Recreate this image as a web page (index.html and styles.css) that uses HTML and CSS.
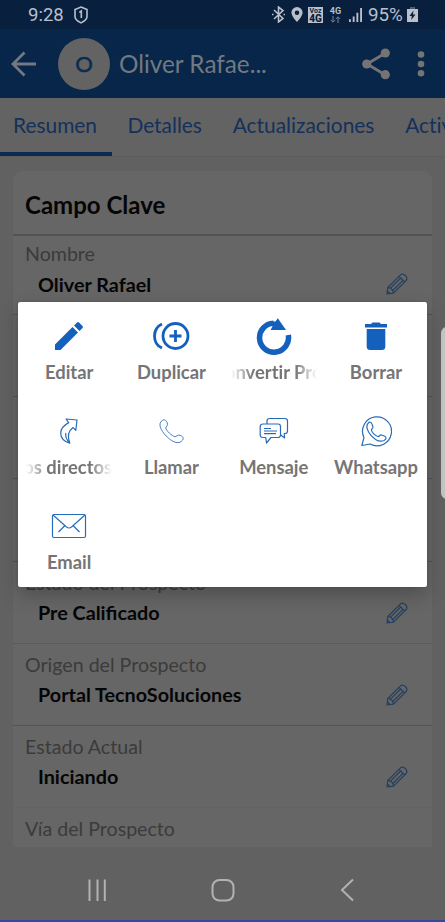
FILE: index.html
```html
<!DOCTYPE html>
<html lang="es">
<head>
<meta charset="utf-8">
<title>Oliver Rafael</title>
<link rel="stylesheet" href="styles.css">
</head>
<body>
<svg class="symbols" aria-hidden="true">
  <symbol id="edit-outline" viewBox="0 0 22 22">
    <path d="M1 21l.8-6.500L14.500 1.800c3-2.400 8 2.300 5.700 5.700L7.500 20.200zM1.800 14.500l2.700.7 2.300 2.300.7 2.700M13 3.300l5.700 5.700M4.500 15.200L14.700 5M6.800 17.500L17 7.300M1.500 18l2.500 2.500"/>
  </symbol>
</svg>
<div class="phone">
  <header class="status">
    <span class="clock">9:28</span>
    <svg class="shield" width="16" height="18" viewBox="0 0 16 18"><path d="M8 1l6 2.500v7.200c0 2.600-3 4.700-6 6.200-3-1.500-6-3.600-6-6.200V3.500z"/><path d="M6.300 6.300L8.300 5v7"/></svg>
    <div class="indicators">
      <svg class="bt" width="15" height="17" viewBox="0 0 15 17"><path d="M3 4l9 8.500L7.500 16V1L12 4.500 3 13M1 8.500h1.500M12.500 8.500H14"/></svg>
      <svg class="pin" width="12" height="15" viewBox="0 0 12 15"><path fill-rule="evenodd" d="M6 0a5.600 5.600 0 0 1 5.600 5.600C11.600 9.500 6 15 6 15S.4 9.500.4 5.600A5.600 5.600 0 0 1 6 0zm0 3.400a2.300 2.300 0 1 0 0 4.600 2.300 2.300 0 0 0 0-4.600z"/></svg>
      <span class="volte"><span>Voz</span><b>4G</b></span>
      <span class="data"><span>4G</span><svg width="11" height="7" viewBox="0 0 11 7"><path d="M3 0v6M.8 4L3 6.200 5.200 4M8 7V1M5.800 3L8 .8 10.200 3"/></svg></span>
      <svg class="signal" width="13" height="14" viewBox="0 0 14 15"><path d="M0 12h2v3H0zM4 9h2v6H4zM8 5h2v10H8zM12 0h2v15h-2z"/></svg>
      <span class="percent">95%</span>
      <svg class="battery" width="11" height="15" viewBox="0 0 11 15"><path opacity=".4" d="M3 0h5v2H3z"/><path fill-rule="evenodd" d="M0 2h11v13H0zM6.500 3.500L2.500 9h2.300l-.6 4L8.500 7.500H6z"/></svg>
    </div>
  </header>

  <div class="appbar">
    <svg class="back" width="26" height="26" viewBox="0 0 26 26"><path d="M25 13H2M13.500 1.500L2 13l11.500 11.500"/></svg>
    <span class="avatar">O</span>
    <h1>Oliver Rafae...</h1>
    <svg class="share" width="28" height="32" viewBox="0 0 28 32"><path d="M23.500 5L5 16l18.500 11"/><circle cx="23.300" cy="5" r="4.600"/><circle cx="4.700" cy="16" r="4.600"/><circle cx="23.300" cy="26.700" r="4.600"/></svg>
    <svg class="more" width="8" height="26" viewBox="0 0 8 26"><circle cx="4" cy="3.500" r="3.300"/><circle cx="4" cy="13" r="3.300"/><circle cx="4" cy="22.300" r="3.300"/></svg>
  </div>

  <nav class="tabs">
    <span class="tab active">Resumen</span><span class="tab">Detalles</span><span class="tab">Actualizaciones</span><span class="tab">Actividades</span>
  </nav>

  <main class="content">
    <section class="card">
      <h2>Campo Clave</h2>
      <div class="field first"><label>Nombre</label><div class="value"><span>Oliver Rafael</span><svg class="pencil"><use href="#edit-outline"/></svg></div></div>
      <div class="field"></div>
      <div class="field"></div>
      <div class="field"></div>
      <div class="field light"><label>Estado del Prospecto</label><div class="value"><span>Pre Calificado</span><svg class="pencil"><use href="#edit-outline"/></svg></div></div>
      <div class="field"><label>Origen del Prospecto</label><div class="value"><span>Portal TecnoSoluciones</span><svg class="pencil"><use href="#edit-outline"/></svg></div></div>
      <div class="field faint"><label>Estado Actual</label><div class="value"><span>Iniciando</span><svg class="pencil"><use href="#edit-outline"/></svg></div></div>
      <div class="field"><label>Vía del Prospecto</label></div>
    </section>
  </main>

  <footer class="navbar">
    <svg width="20" height="24" viewBox="0 0 20 24"><path d="M2.500 1.500v21.500M10.500 1.500v21.500M17.800 1.500v21.500"/></svg>
    <svg width="24" height="24" viewBox="0 0 24 24"><rect x="1.500" y="2" width="21" height="20.500" rx="7"/></svg>
    <svg width="16" height="24" viewBox="0 0 16 24"><path d="M14 1.500L3 12l11 10.500"/></svg>
  </footer>

  <div class="edge-handle"></div>

  <div class="dialog">
    <div class="action"><div class="icon"><svg class="solid" width="36" height="36" viewBox="0 0 36 36"><path d="M4 26.500L21.500 9l5.500 5.500L9.500 32H4zM23 7.500l3-3q1-1 2 0l3.500 3.500q1 1 0 2l-3 3z"/></svg></div><span class="label">Editar</span></div>
    <div class="action"><div class="icon"><svg class="thick" width="40" height="36" viewBox="0 0 40 36"><circle cx="24.500" cy="18" r="12.500"/><path d="M24.500 12v12M18.500 18h12M11 5.900C1 10.500 1 25.500 11 30.100"/></svg></div><span class="label">Duplicar</span></div>
    <div class="action"><div class="icon"><svg class="convert" width="38" height="38" viewBox="0 0 38 38"><path class="arc" d="M33.300 18A14.500 14.500 0 1 1 18.500 6.200"/><path class="head" d="M22.800 1.200L31 13H15.500L17.500 9.500 15 4.500H20.500z"/></svg></div><span class="label faded convert-label"><span>Convertir Pros</span></span></div>
    <div class="action"><div class="icon"><svg class="solid" width="24" height="30" viewBox="0 0 24 30"><path d="M1 3h6l1.500-1.500h7L17 3h6v3.500H1zM2.700 8h18.600v17.500q0 3.500-3.500 3.500H6.200q-3.500 0-3.500-3.500z"/></svg></div><span class="label">Borrar</span></div>

    <div class="action"><div class="icon"><svg class="thin" width="18" height="26" viewBox="0 0 18 26"><path d="M6 1L17 2 15.800 12.300 13 9.600C7.700 13.500 7.500 19.500 9.800 25.300 4 23.500.7 19.500.7 15 .7 10.500 4.300 7 8.700 4.600zM9.800 25.300C6 21 5 18 5.800 15"/></svg></div><span class="label faded end"><span>Accesos directos</span></span></div>
    <div class="action"><div class="icon"><svg class="thin pale" width="25" height="25" viewBox="0 0 26 26"><path d="M3.500 1.500C5.700-.1 7.500 1.400 8.600 4 9.800 7 7 7.800 7 9.300c0 2.500 7 8.800 9.500 9.100 1.700.2 2.700-2.500 5.500-1.400 2.500 1 4.200 2.500 2.500 5-1.800 2.600-5 3.200-8.200 2C10.500 21.700 3.500 14.500 1.400 8.500.5 5.700 1 3 3.500 1.500z"/></svg></div><span class="label">Llamar</span></div>
    <div class="action"><div class="icon"><svg class="thin" width="30" height="28" viewBox="0 0 30 28"><path d="M8 6.500V4q0-2.500 2.500-2.500H26q2.500 0 2.500 2.500v10q0 2.500-2.500 2.500h-.8l.4 4.500-3.800-3M4 7h15q2.500 0 2.500 2.500V18q0 2.500-2.500 2.500h-7L7.500 26l-.8-5.500H4Q1.200 20.500 1.200 18V9.500Q1.200 7 4 7zM5 11.500h7M5 14h13M5 16.700h12"/></svg></div><span class="label">Mensaje</span></div>
    <div class="action"><div class="icon"><svg class="thin" width="32" height="32" viewBox="0 0 32 32"><path d="M1.800 30.500l2.200-7.800A14.500 14.500 0 1 1 10 29z"/><path d="M8 8.300c1.500-1.800 3.300-1.300 4 .8l.9 2.600c.6 1.800-1.700 2-1.500 3.300.4 2.300 4 5.800 6.500 6.500 1.600.4 1.900-2.200 3.700-1.500l3.200 1.300c2.300 1 1 3.300-.8 4.200-5 2.300-10-1.700-13.200-5.400C7.500 16.300 5.500 11.200 8 8.300z"/></svg></div><span class="label">Whatsapp</span></div>

    <div class="action"><div class="icon"><svg class="thin" width="36" height="26" viewBox="0 0 36 26"><rect x="1.500" y="1.500" width="33" height="23" rx="1.500"/><path d="M2 2l13.500 12q2.500 2 5 0L34 2M13.500 13l-6 6M22.500 13l6 6"/></svg></div><span class="label">Email</span></div>
  </div>
</div>
</body>
</html>
```
FILE: styles.css
```css
* { box-sizing: border-box; }
body { margin: 0; background: #616161; font-family: Lato, "Liberation Sans", sans-serif; }
svg { display: block; flex: none; }
.symbols { position: absolute; width: 0; height: 0; }
.phone { position: relative; width: 445px; height: 922px; overflow: hidden; display: flex; flex-direction: column; }

.status { height: 29px; flex: none; background: #081f3d; color: #b9c0ca; display: flex; align-items: center; padding: 0 27px 0 28px; font-family: Roboto, sans-serif; }
.clock { font-size: 18.500px; width: 45px; }
.status svg { fill: #b9c0ca; }
.shield path, .bt path { fill: none; stroke: #b9c0ca; stroke-width: 1.600; }
.indicators { display: flex; align-items: center; margin-left: auto; }
.pin { margin-left: 5px; }
.volte { width: 15px; height: 16px; margin-left: 5px; background: #b9c0ca; color: #081f3d; display: flex; flex-direction: column; align-items: center; line-height: 8px; font-size: 7px; font-weight: 700; }
.volte b { font-size: 10px; line-height: 8px; }
.data { display: flex; flex-direction: column; align-items: center; margin-left: 6px; width: 13px; font-size: 9px; line-height: 9px; font-weight: 700; }
.data path { fill: none; stroke: #76859a; }
.signal { margin-left: 7px; }
.percent { font-size: 18.800px; margin: 0 4px 0 6px; width: 35px; letter-spacing: -.1px; }

.appbar { height: 69px; flex: none; background: #082649; display: flex; align-items: center; padding: 0 20px 0 11px; color: #727980; }
.back path { fill: none; stroke: #727980; stroke-width: 2.800; }
.avatar { width: 52px; height: 52px; margin-left: 21px; border-radius: 50%; background: #636363; color: #0b2b50; display: flex; align-items: center; justify-content: center; font-size: 22px; -webkit-text-stroke: .5px #0b2b50; }
.appbar h1 { margin: 0 auto 0 9px; font-size: 24.300px; font-weight: 400; white-space: nowrap; }
.share { fill: #747474; margin-right: 27px; }
.share path { fill: none; stroke: #747474; stroke-width: 2.800; }
.more { fill: #747474; }

.tabs { height: 59px; flex: none; background: #636363; display: flex; overflow: hidden; border-bottom: 1px solid #5d5d5d; }
.tab { flex: none; height: 58px; padding: 14px 15.400px 0; font-size: 20.900px; line-height: 26px; color: #13315a; white-space: nowrap; font-variant-ligatures: none; }
.tab.active { width: 112px; padding-left: 13px; border-bottom: 4px solid #0a2a52; }

.content { flex: 1; padding: 14px 13px 0; }
.card { height: 676px; overflow: hidden; border-radius: 9px 9px 0 0; background: #666; }
.card h2 { margin: 0; height: 65px; padding: 0 12px; border-bottom: 2px solid #535353; font-size: 24px; line-height: 68px; color: #050505; }
.field { height: 82.200px; padding: 8px 24px 0 12px; border-bottom: 1px solid #535353; color: #3b3b3b; }
.field.first { height: 79px; padding-top: 5px; }
.field label { display: block; font-size: 19.600px; line-height: 26px; }
.field.light { border-bottom-color: #5b5b5b; }
.field.faint { border-bottom-color: #636363; }
.value { display: flex; align-items: center; justify-content: space-between; height: 34px; padding-left: 13px; font-size: 19.800px; font-weight: 700; color: #050505; }
.value span { margin-top: -1px; }
.pencil { width: 22px; height: 22px; fill: none; stroke: #24405f; stroke-width: 1.200; stroke-linejoin: round; }

.navbar { height: 65px; flex: none; border-bottom: 2px solid #3446a0; padding: 2px 90px 0 87px; display: flex; justify-content: space-between; align-items: center; }
.navbar svg { fill: none; stroke: #b2b2b2; stroke-width: 2; }

.edge-handle { position: absolute; left: 441px; top: 327px; width: 12px; height: 172px; border-radius: 7px; background: #c4c4c4; }

.dialog { position: absolute; left: 18px; top: 302px; width: 409px; height: 285px; border-radius: 2px; background: #fff; box-shadow: 0 8px 20px rgba(0, 0, 0, .24), 0 0 2px #555; display: grid; grid-template-columns: repeat(4, 102.300px); grid-template-rows: repeat(3, 95px); }
.action { display: flex; flex-direction: column; align-items: center; min-width: 0; }
.icon { height: 68px; width: 100%; display: flex; align-items: center; justify-content: center; flex: none; }
.label { margin-top: -10px; font-size: 18.400px; line-height: 25px; font-weight: 700; color: #757575; white-space: nowrap; font-variant-ligatures: none; }
.faded { width: 86px; overflow: hidden; display: flex; justify-content: center; -webkit-mask-image: linear-gradient(90deg, transparent, #000 22px, #000 64px, transparent); mask-image: linear-gradient(90deg, transparent, #000 22px, #000 64px, transparent); }
.faded span { flex: none; }
.faded.end { justify-content: flex-end; }
.convert-label { padding-right: 4px; }
.solid { fill: #1460bd; }
.thick { fill: none; stroke: #1460bd; stroke-width: 2.800; }
.arc { fill: none; stroke: #1460bd; stroke-width: 5.500; }
.head { fill: #1460bd; }
.thin { fill: none; stroke: #286bb8; stroke-width: 1.200; stroke-linejoin: round; }
.pale { stroke-width: .9; }
```
